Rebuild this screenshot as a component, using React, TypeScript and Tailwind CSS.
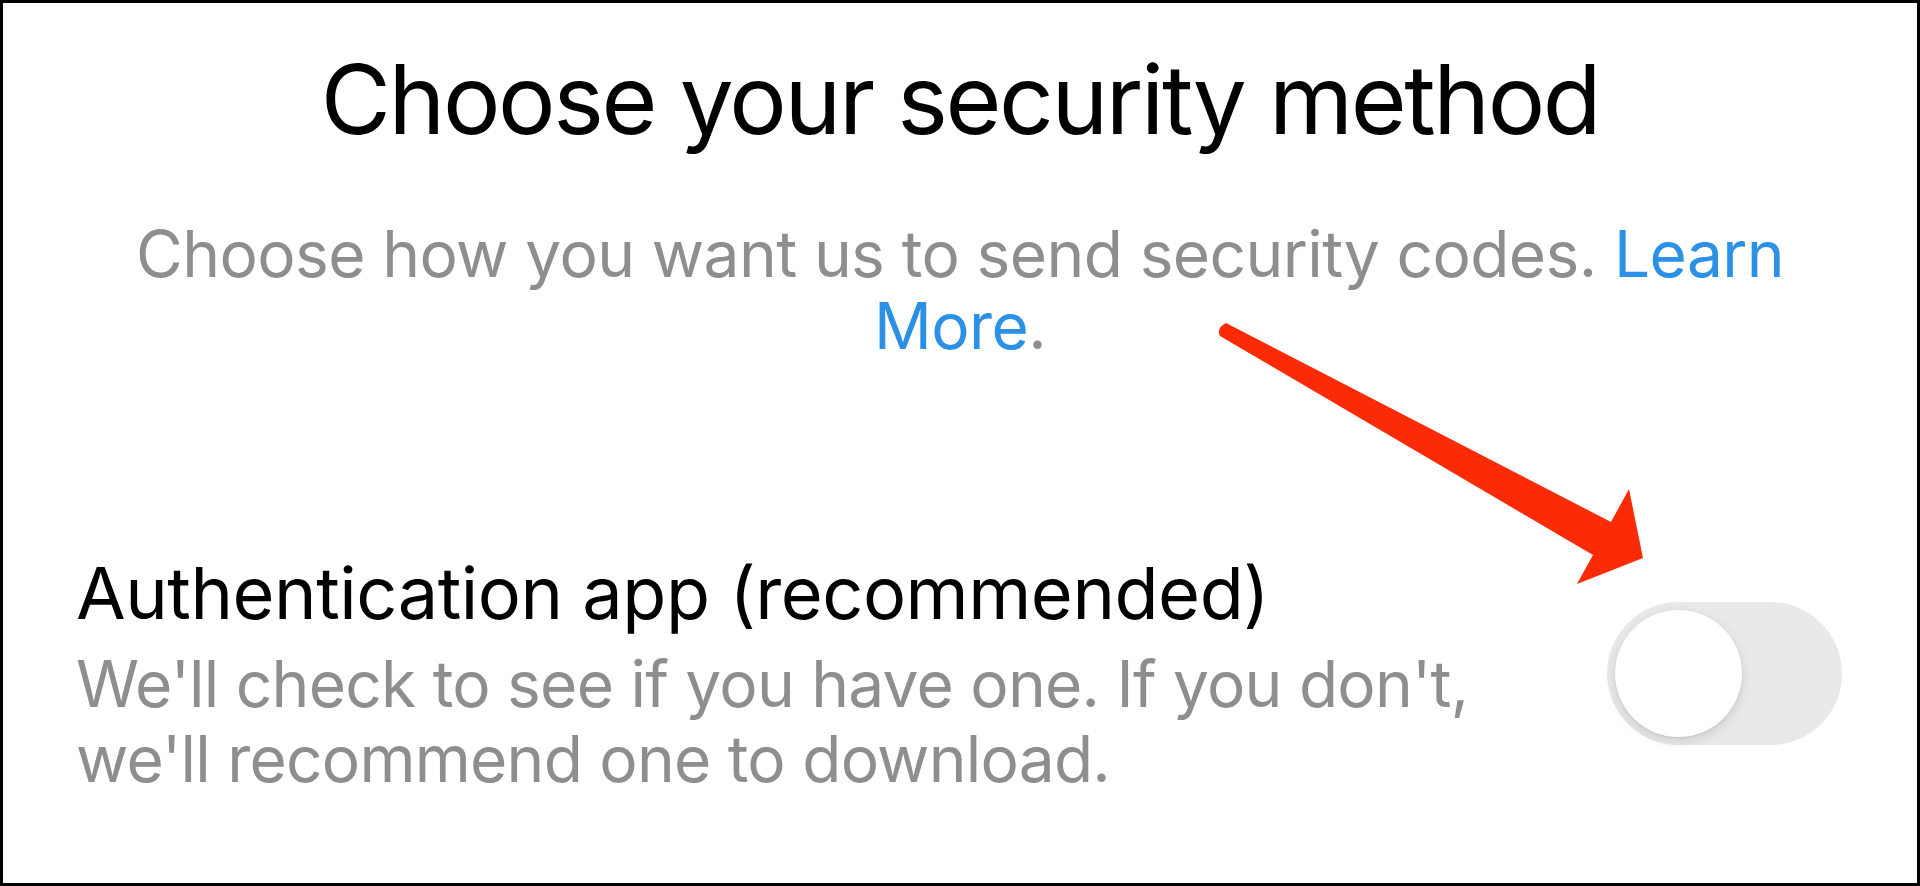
const font = { fontFamily: 'Inter, "Liberation Sans", sans-serif' }

function Toggle() {
  return (
    <div className="mt-[45px] flex h-[143px] w-[235px] shrink-0 items-center rounded-full bg-[#e9e9eb] p-[8px]">
      <div className="h-[127px] w-[127px] rounded-full bg-white shadow-[0_4px_12px_rgba(0,0,0,0.12),0_1px_2px_rgba(0,0,0,0.08)]" />
    </div>
  )
}

function Arrow() {
  // hand-drawn style annotation arrow pointing at the switch
  return (
    <svg
      className="pointer-events-none absolute left-[-3px] top-[-3px]"
      width="1920"
      height="886"
      viewBox="0 0 1920 886"
      aria-hidden="true"
    >
      <path
        d="M1226 323 L1611 522 L1629 489 L1643 558 L1577 584 L1593 555 L1220 336 Q1216 328 1226 323 Z"
        fill="#fc2b07"
      />
    </svg>
  )
}

export default function App() {
  return (
    <div
      className="relative flex h-[886px] w-full flex-col border-[3px] border-black bg-white pt-[46px] text-black"
      style={font}
    >
      <h1 className="text-center text-[96px] font-normal leading-[100px] tracking-[-2.4px]">
        Choose your security method
      </h1>

      <p className="mt-[69px] text-center text-[64px] leading-[72px] tracking-[-0.6px] text-[#8e8e8e]">
        Choose how you want us to send security codes. <span className="text-[#2a91e6]">Learn</span>
        <br />
        <span className="text-[#2a91e6]">More</span>.
      </p>

      <div className="mt-[195px] flex items-start justify-between pl-[73px] pr-[75px]">
        <div className="flex flex-col">
          <h2 className="text-[72px] font-normal leading-[72px] tracking-[-0.45px]">
            Authentication app (recommended)
          </h2>
          <p className="mt-[17px] text-[64px] leading-[75px] tracking-[-0.76px] text-[#8e8e8e]">
            We&apos;ll check to see if you have one. If you don&apos;t,
            <br />
            we&apos;ll recommend one to download.
          </p>
        </div>
        <Toggle />
      </div>

      <Arrow />
    </div>
  )
}
